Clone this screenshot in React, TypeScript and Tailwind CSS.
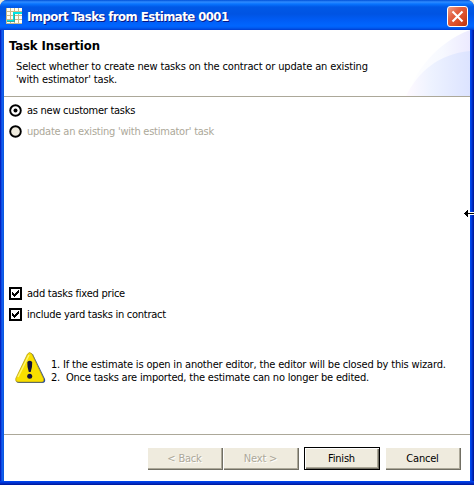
import React from "react";

const uiFont = "font-['DejaVu_Sans_Condensed','DejaVu_Sans',sans-serif] [font-stretch:condensed]";

function Line({ className = "", children }: { className?: string; children: React.ReactNode }) {
  return <span className={`block whitespace-pre text-[11px] leading-[13px] ${className}`}>{children}</span>;
}

function AppIcon() {
  return (
    <svg width="16" height="16" viewBox="0 0 16 16" shapeRendering="crispEdges" className="shrink-0">
      <rect width="16" height="16" fill="#fffff4" />
      <path d="M4 0h1v16h-1zM8 0h1v16h-1zM12 0h1v16h-1zM0 3h16v1H0zM0 7h16v1H0zM0 11h16v1H0zM0 15h16v1H0zM0 0h1v16H0z" fill="#c8b98c" />
      <path d="M7 4H16V6H9V14H1V12H7Z" fill="#00e4e4" />
      <path d="M8 6H9V14H1V13H8Z" fill="#30a8a0" />
    </svg>
  );
}

function CloseButton() {
  return (
    <button className="flex h-[21px] w-[21px] items-center justify-center rounded-[3px] border border-white bg-[linear-gradient(135deg,#f0a088_0%,#e26142_35%,#dc4d26_65%,#b93308_100%)]">
      <svg width="13" height="13" viewBox="0 0 13 13">
        <path d="M1.5 1.5L11.5 11.5M11.5 1.5L1.5 11.5" stroke="#fff" strokeWidth="2.1" />
      </svg>
    </button>
  );
}

function Radio({ checked = false }: { checked?: boolean }) {
  return (
    <svg width="13" height="13" viewBox="0 0 13 13" className="shrink-0">
      <circle cx="6.5" cy="6.5" r="5.3" fill={checked ? "#fff" : "#efebde"} stroke="#000" strokeWidth="1.9" />
      {checked && <circle cx="6.5" cy="6.5" r="2" />}
    </svg>
  );
}

function Checkbox() {
  return (
    <svg width="13" height="13" viewBox="0 0 13 13" shapeRendering="crispEdges" className="shrink-0">
      <rect width="13" height="13" />
      <rect x="2" y="2" width="9" height="9" fill="#fff" />
      <path d="M3 5h1v1h1v1h1v-1h1v-1h1v-1h1v-1h1v3h-1v1h-1v1h-1v1h-1v1h-1v-1h-1v-1h-1z" />
    </svg>
  );
}

function Warning() {
  return (
    <svg width="31" height="32" viewBox="0 0 31 32" className="shrink-0">
      <path d="M14 1.5Q16 0 18 2.5L30 27Q31 31 27 31H4Q1 31 1 28Z" fill="#244a9c" />
      <path d="M12.5 2Q14.5-1 17 2L28.5 26.5Q29.5 30 26 30H3Q0 30 .8 26.5Z" fill="#f8df00" stroke="#b8a018" strokeWidth=".8" />
      <path d="M3 25L14 3" stroke="#fff46b" strokeWidth="1.5" />
      <path d="M12.3 10Q14.7 7.5 17.2 10Q17.5 14 15.7 20H13.8Q12 14 12.3 10Z" fill="#10103c" />
      <circle cx="14.7" cy="24.2" r="2.5" fill="#10103c" />
    </svg>
  );
}

function Button({ label, width, disabled = false, primary = false, className = "" }: {
  label: string; width: string; disabled?: boolean; primary?: boolean; className?: string;
}) {
  const edge = primary
    ? "border border-black shadow-[inset_1px_1px_#fff,inset_-1px_-1px_#716f64,inset_-2px_-2px_#aca899]"
    : "shadow-[inset_1px_1px_#fff,inset_-1px_-1px_#716f64,inset_-2px_-2px_#aca899]";
  return (
    <button disabled={disabled} className={`flex h-[23px] items-center justify-center bg-[#efebde] pr-px text-[11px] leading-[13px] tracking-[-0.2px] ${width} ${edge} ${disabled ? "text-[#aca899] [text-shadow:1px_1px_#fff]" : "text-black"} ${className}`}>
      {label}
    </button>
  );
}

function Swoosh() {
  return (
    <svg width="66" height="66" viewBox="0 0 66 66" className="absolute right-0 bottom-0">
      <defs>
        <linearGradient id="outer" x1="0" x2="1">
          <stop offset="0" stopColor="#fff" /><stop offset=".55" stopColor="#f7f9ff" /><stop offset="1" stopColor="#eceaff" />
        </linearGradient>
        <linearGradient id="inner" x1="0" x2="1">
          <stop offset="0" stopColor="#fffaff" /><stop offset=".4" stopColor="#edf2ff" /><stop offset="1" stopColor="#dce3ff" />
        </linearGradient>
      </defs>
      <path d="M4 66C10 42 32 13 66 0V66Z" fill="url(#outer)" />
      <path d="M2 66C14 42 34 24 66 21V66Z" fill="url(#inner)" />
    </svg>
  );
}

export default function App() {
  return (
    <div className={`relative h-[485px] w-[474px] overflow-hidden bg-[#ece9d8] text-black ${uiFont}`}>
      <div className="flex h-full flex-col rounded-t-[7px] bg-[linear-gradient(90deg,#0016a8_0px,#0831d9_1px,#1463f0_2px,#0855dd_4px,#0048e8_470px,#0048f0_471px,#0030d0_472px,#001590_474px)]">
        <header className="flex h-[30px] shrink-0 items-center rounded-t-[7px] bg-[linear-gradient(180deg,#0050d8_0px,#2f8bff_2px,#0874ff_4px,#0058e6_7px,#0054e3_14px,#005cf5_20px,#0066ff_26px,#005af0_28px,#003dd0_30px)] pt-[2px] pr-[6px] pl-[6px]">
          <AppIcon />
          <h1 className="ml-[5px] flex-1 pt-px whitespace-nowrap text-[13px] leading-4 font-bold tracking-[-0.54px] text-white [text-shadow:1px_1px_#0a1883]">Import Tasks from Estimate 0001</h1>
          <CloseButton />
        </header>
        <main className="mx-1 flex h-[451px] shrink-0 flex-col bg-white">
          <section className="relative h-[67px] shrink-0 border-b border-[#aca899] pt-[8px] pl-[5px]">
            <Swoosh />
            <h2 className="relative text-[13px] leading-[15px] font-bold tracking-[-0.1px]">Task Insertion</h2>
            <div className="relative mt-[7px] pl-[7px]">
              <Line className="tracking-[-0.15px]">Select whether to create new tasks on the contract or update an existing</Line>
              <Line className="tracking-[-0.15px]">'with estimator' task.</Line>
            </div>
          </section>
          <section className="flex h-[190px] shrink-0 flex-col gap-2 pt-[7px] pl-[5px]">
            <label className="flex h-[13px] items-center gap-[5px]"><Radio checked /><Line className="tracking-[-0.27px]">as new customer tasks</Line></label>
            <label className="flex h-[13px] items-center gap-[5px] text-[#aca899]"><Radio /><Line className="tracking-[-0.24px]">update an existing 'with estimator' task</Line></label>
          </section>
          <section className="flex h-[65px] shrink-0 flex-col gap-2 pl-[5px]">
            <label className="flex h-[13px] items-center gap-[5px]"><Checkbox /><Line className="tracking-[-0.23px]">add tasks fixed price</Line></label>
            <label className="flex h-[13px] items-center gap-[5px]"><Checkbox /><Line className="tracking-[-0.26px]">include yard tasks in contract</Line></label>
          </section>
          <section className="flex h-[82px] shrink-0 items-start pl-[11px]">
            <Warning />
            <div className="pt-[6px] pl-[5px]">
              <Line className="tracking-[-0.175px]">1. If the estimate is open in another editor, the editor will be closed by this wizard.</Line>
              <Line className="tracking-[-0.2px]">2.  Once tasks are imported, the estimate can no longer be edited.</Line>
            </div>
          </section>
          <footer className="flex h-[47px] items-start border-t border-[#aca899] pt-[12px] pl-[143px]">
            <Button label="< Back" width="w-[76px]" disabled />
            <Button label="Next >" width="w-[76px]" disabled />
            <Button label="Finish" width="w-[76px]" primary className="ml-[5px]" />
            <Button label="Cancel" width="w-[76px]" className="ml-[5px]" />
          </footer>
        </main>
        <div className="h-1 shrink-0 bg-[linear-gradient(180deg,#0048f0,#0030d0,#001590)]" />
      </div>
      <svg width="10" height="9" viewBox="0 0 10 9" shapeRendering="crispEdges" className="absolute top-[209px] left-[464px]">
        <path d="M6 3H10V6H6Z" fill="#fff" />
        <path d="M0 4H1V3H2V2H3V1H4V4H10V5H4V8H3V7H2V6H1V5H0Z" />
      </svg>
    </div>
  );
}
